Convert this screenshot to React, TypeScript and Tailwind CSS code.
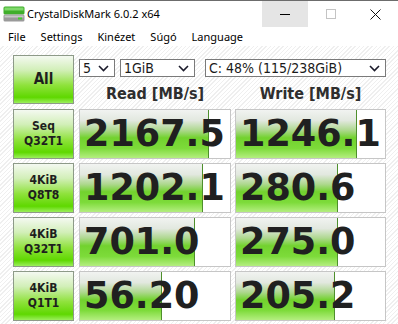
import React from "react";

interface Row {
  line1: string;
  line2: string;
  read: string;
  readBar: number;
  write: string;
  writeBar: number;
}

const rows: Row[] = [
  { line1: "Seq", line2: "Q32T1", read: "2167.5", readBar: 129, write: "1246.1", writeBar: 121 },
  { line1: "4KiB", line2: "Q8T8", read: "1202.1", readBar: 123, write: "280.6", writeBar: 102 },
  { line1: "4KiB", line2: "Q32T1", read: "701.0", readBar: 115, write: "275.0", writeBar: 102 },
  { line1: "4KiB", line2: "Q1T1", read: "56.20", readBar: 82, write: "205.2", writeBar: 99 },
];

const Chevron = () => (
  <svg width="11" height="7" viewBox="0 0 11 7" className="shrink-0">
    <path d="M1 1 L5.5 5.5 L10 1" fill="none" stroke="#1b1b2b" strokeWidth="1.6" />
  </svg>
);

// dropdown-like box
const Select = ({ value, className }: { value: string; className: string }) => (
  <div
    className={
      "h-[18px] flex items-center justify-between bg-white border border-[#7a7a7a] pl-[3px] pr-[5px] text-[14px] leading-none text-[#1a1a1a] font-['DejaVu_Sans_Condensed','DejaVu_Sans',sans-serif] " +
      className
    }
  >
    <span>{value}</span>
    <Chevron />
  </div>
);

const ValueBox = ({ value, bar }: { value: string; bar: number }) => (
  <div className="relative h-full bg-white border border-[#c6c6c6] overflow-hidden">
    <div
      className="absolute left-0 top-0 bottom-0 border-r border-[#4e8f2c] bg-[linear-gradient(to_bottom,#f1f3f1_0%,#e2e8df_22%,#aed88f_42%,#72d22e_58%,#7ddb3a_80%,#b4ee80_100%)]"
      style={{ width: bar }}
    />
    <div className="relative h-full flex items-center pl-[4px] text-[36.5px] font-bold leading-none text-[#202020] font-['DejaVu_Sans',sans-serif] whitespace-nowrap">
      {value}
    </div>
  </div>
);

export default function App() {
  return (
    <div className="w-[398px] h-[324px] overflow-hidden bg-white border-t border-[#6c6c6c] font-['Noto_Sans',sans-serif] flex flex-col">
      {/* Title bar */}
      <div className="h-[26px] flex items-start shrink-0">
        <svg width="22" height="16" viewBox="0 0 22 16" className="ml-[3px] mt-[5px]">
          <rect x="0.5" y="0.5" width="21" height="8" rx="1.5" fill="#3fae2a" />
          <rect x="1.5" y="1.5" width="19" height="3" fill="#7fd86a" />
          <rect x="0.5" y="8.5" width="21" height="7" rx="1.5" fill="#9a9a9a" />
          <rect x="1.5" y="9.5" width="19" height="2" fill="#c8c8c8" />
          <rect x="15" y="11.5" width="4" height="2" fill="#3fd12a" />
        </svg>
        <span className="ml-[2px] mt-[7px] text-[11px] leading-none text-black">CrystalDiskMark 6.0.2 x64</span>
        <div className="ml-auto flex h-[26px]">
          <div className="w-[46px] h-full bg-[#e5e5e5] flex items-center justify-center">
            <div className="w-[10px] h-[1px] bg-black" />
          </div>
          <div className="w-[45px] h-full flex items-center justify-center">
            <div className="w-[10px] h-[10px] border border-[#c4c4c4]" />
          </div>
          <div className="w-[45px] h-full flex items-center justify-center">
            <svg width="11" height="11" viewBox="0 0 11 11">
              <path d="M0.5 0.5 L10.5 10.5 M10.5 0.5 L0.5 10.5" stroke="#111" strokeWidth="1" />
            </svg>
          </div>
        </div>
      </div>

      {/* Menu */}
      <div className="h-[19px] flex items-center gap-[15px] pl-[8px] text-[11px] leading-none text-black shrink-0">
        <span>File</span>
        <span>Settings</span>
        <span>Kinézet</span>
        <span>Súgó</span>
        <span>Language</span>
      </div>

      {/* Main area */}
      <div className="flex-1 pl-[13px] pt-[9px] bg-[repeating-linear-gradient(135deg,#ffffff_0px,#ffffff_2px,#efefef_2px,#efefef_3px)]">
        <div className="flex gap-[5px]">
          <div className="w-[61px] h-[49px] border border-[#8d9a88] bg-[linear-gradient(to_bottom,#f4f9f1_0%,#d2efb8_30%,#8fe23c_62%,#5fd800_88%,#9bef5c_100%)] flex items-center justify-center text-[15px] font-bold text-[#1e1e1e] font-['DejaVu_Sans_Condensed','DejaVu_Sans',sans-serif]">
            All
          </div>
          <div className="flex flex-col">
            <div className="flex mt-[4px]">
              <Select value="5" className="w-[36px]" />
              <Select value="1GiB" className="w-[75px] ml-[5px]" />
              <Select value="C: 48% (115/238GiB)" className="w-[181px] ml-[10px]" />
            </div>
            <div className="flex h-[27px] pt-[6px] items-center text-[16px] font-bold leading-none text-[#2e2e2e] font-['DejaVu_Sans_Condensed','DejaVu_Sans',sans-serif]">
              <div className="w-[152px] text-center">Read [MB/s]</div>
              <div className="w-[151px] ml-[4px] text-center">Write [MB/s]</div>
            </div>
          </div>
        </div>

        <div className="flex flex-col gap-[4px] mt-[5px]">
          {rows.map((r, i) => (
            <div key={i} className="flex h-[50px]">
              <div className="w-[61px] h-full border border-[#8d9a88] bg-[linear-gradient(to_bottom,#f4f9f1_0%,#d2efb8_30%,#8fe23c_62%,#5fd800_88%,#9bef5c_100%)] flex flex-col items-center justify-center text-[12px] font-bold leading-[15px] text-[#1e1e1e] font-['DejaVu_Sans_Condensed','DejaVu_Sans',sans-serif]">
                <span>{r.line1}</span>
                <span>{r.line2}</span>
              </div>
              <div className="w-[152px] ml-[5px] h-full">
                <ValueBox value={r.read} bar={r.readBar} />
              </div>
              <div className="w-[151px] ml-[4px] h-full">
                <ValueBox value={r.write} bar={r.writeBar} />
              </div>
            </div>
          ))}
        </div>
      </div>
    </div>
  );
}
